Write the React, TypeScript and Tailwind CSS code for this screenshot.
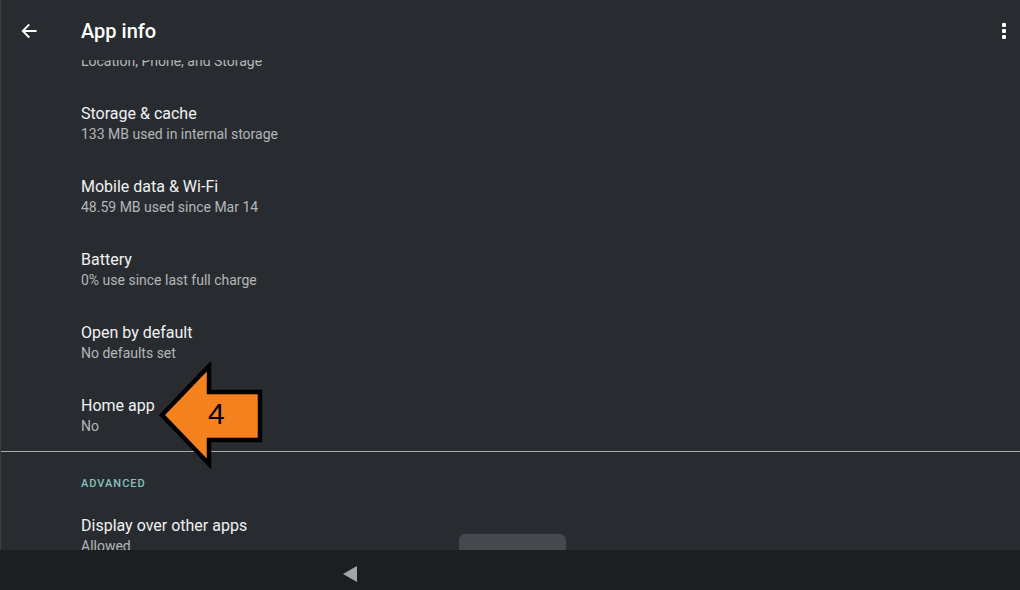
import React from "react";

const rows = [
  { t: "", s: "Location, Phone, and Storage" },
  { t: "Storage & cache", s: "133 MB used in internal storage" },
  { t: "Mobile data & Wi-Fi", s: "48.59 MB used since Mar 14" },
  { t: "Battery", s: "0% use since last full charge" },
  { t: "Open by default", s: "No defaults set" },
  { t: "Home app", s: "No" },
];

function Row({ t, s }: { t: string; s: string }) {
  return (
    <div className="flex flex-col pl-[81px] pb-[1px]">
      <div className="h-[20px] text-[16px] leading-[20px] text-[#f1f2f3]">{t}</div>
      <div className="text-[14px] leading-[20px] text-[#b4b7ba]">{s}</div>
    </div>
  );
}

export default function App() {
  return (
    <div
      className="relative w-[1020px] h-[590px] overflow-hidden bg-[#282c30]"
      style={{ fontFamily: "Roboto, 'Noto Sans', sans-serif" }}
    >
      {/* scrolled list */}
      <div className="flex flex-col pt-[31px]">
        <div className="flex flex-col gap-[32px]">
          {rows.map((r) => (
            <Row key={r.s} t={r.t} s={r.s} />
          ))}
        </div>
        <div className="h-px bg-[#a8abad] mt-[14px]" />
        <div className="pl-[81px] mt-[24px] h-[16px] text-[11px] leading-[16px] tracking-[1px] font-medium text-[#86c0bd]">
          ADVANCED
        </div>
        <div className="mt-[24px]">
          <Row t="Display over other apps" s="Allowed" />
        </div>
      </div>

      {/* left edge line */}
      <div className="absolute left-0 top-0 bottom-0 w-px bg-[#3c3f42]" />

      {/* header overlays the scrolled list */}
      <div className="absolute left-px right-0 top-0 h-[60px] flex items-center bg-[#282c30] z-10">
        <div className="w-[80px] flex items-center pl-[18px] pt-[1px]">
          <svg width="20" height="20" viewBox="0 0 24 24" fill="none">
            <path d="M20 12H5M11.5 5L4.5 12l7 7" stroke="#ffffff" strokeWidth="2.2" strokeLinecap="square" />
          </svg>
        </div>
        <div className="text-[20px] font-medium text-white leading-none pt-[1px]">App info</div>
        <div className="ml-auto mr-[14px] flex flex-col gap-[2px] pt-[1px]">
          <div className="w-[4px] h-[4px] bg-white rounded-[1px]" />
          <div className="w-[4px] h-[4px] bg-white rounded-[1px]" />
          <div className="w-[4px] h-[4px] bg-white rounded-[1px]" />
        </div>
      </div>

      {/* toast */}
      <div className="absolute left-[459px] top-[534px] w-[107px] h-[30px] rounded-[6px] bg-[#45494d]" />

      {/* nav bar */}
      <div className="absolute left-0 right-0 bottom-0 h-[40px] bg-[#1c1f22] z-20">
        <svg className="absolute left-[343px] top-[16px]" width="14" height="16" viewBox="0 0 14 16">
          <polygon points="14,0 14,16 0,8" fill="#a3a5a7" />
        </svg>
      </div>

      {/* orange annotation arrow */}
      <div className="absolute left-[158px] top-[362px] w-[108px] h-[108px] z-30">
        <svg width="108" height="108" viewBox="158 362 108 108" className="absolute inset-0">
          <polygon
            points="162,415 209,366 209,392 260,392 260,440 209,440 209,464"
            fill="#f5821f"
            stroke="#000000"
            strokeWidth="4.5"
            strokeLinejoin="miter"
          />
        </svg>
        <div
          className="absolute left-[50px] top-[35px] text-[30px] leading-[34px] text-black"
          style={{ fontFamily: "'Liberation Sans', Arial, sans-serif" }}
        >
          4
        </div>
      </div>
    </div>
  );
}
